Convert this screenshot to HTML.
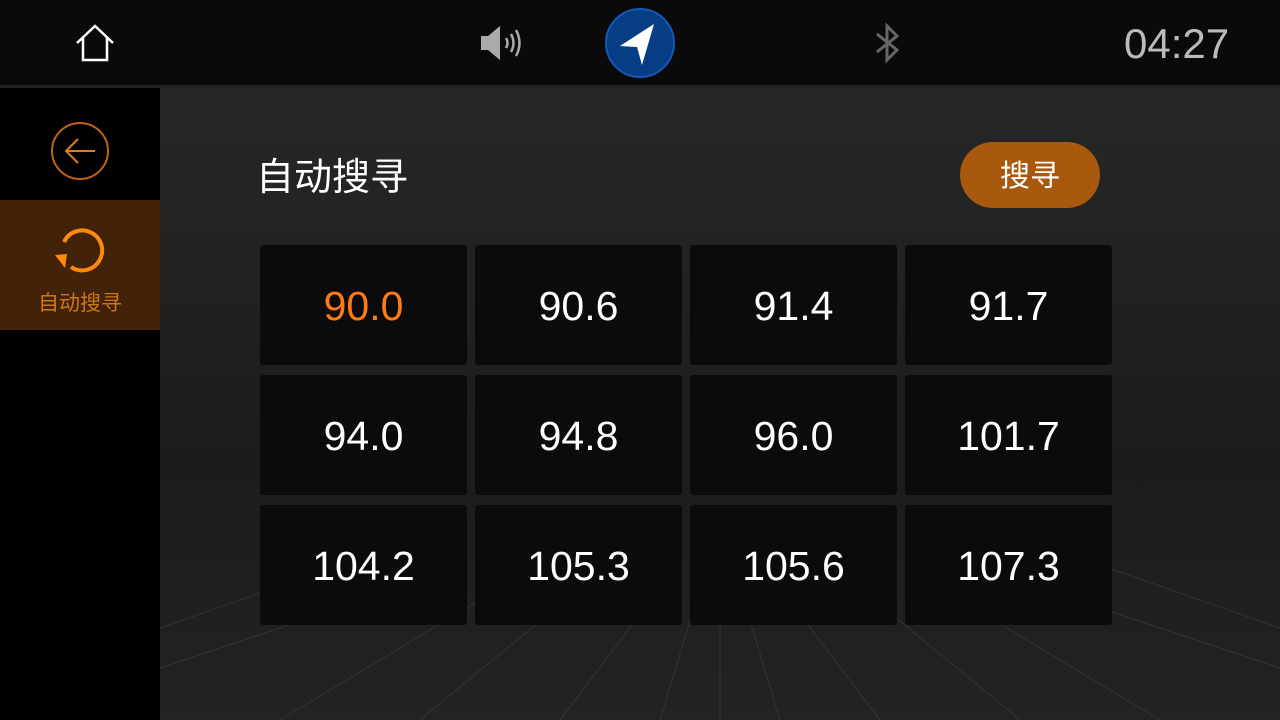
<!DOCTYPE html>
<html><head><meta charset="utf-8"><style>
*{margin:0;padding:0;box-sizing:border-box}
body{width:1280px;height:720px;overflow:hidden;background:#000;font-family:"Liberation Sans","Noto Sans CJK SC",sans-serif;position:relative}
.top{position:absolute;left:0;top:0;width:1280px;height:85px;background:#0a0a0a}
.sep{position:absolute;left:0;top:85px;width:1280px;height:3px;background:#202121}
.side{position:absolute;left:0;top:88px;width:160px;height:632px;background:#000}
.act{position:absolute;left:0;top:200px;width:160px;height:130px;background:#42230a}
.main{position:absolute;left:160px;top:88px;width:1120px;height:632px;background:linear-gradient(#262727,#1b1c1c 60%,#222323);overflow:hidden}
.tile{position:absolute;width:207px;height:120px;background:#0b0b0b;border-radius:3px;color:#fff;font-size:41px;text-align:center;line-height:122px}
</style></head><body>
<div class="top"></div><div class="sep"></div>
<svg style="position:absolute;left:74px;top:24px" width="42" height="38" viewBox="0 0 42 38"><path d="M3 19 L21 2 L39 19 M9 14 V36 H33 V14" fill="none" stroke="#fff" stroke-width="2.5"/></svg>
<svg style="position:absolute;left:478px;top:24px" width="50" height="38" viewBox="0 0 50 38"><path d="M3 12 H10 L22 2 V36 L10 26 H3Z" fill="#aaa"/><path d="M28 14 Q31 19 28 24 M33 10 Q38 19 33 28 M38 6 Q45 19 38 32" fill="none" stroke="#aaa" stroke-width="2.5"/></svg>
<div style="position:absolute;left:605px;top:8px;width:70px;height:70px;border-radius:50%;background:#073d85;border:2px solid #1459b3"></div>
<svg style="position:absolute;left:605px;top:8px" width="70" height="70" viewBox="0 0 70 70"><path d="M49 16 L15 38 L32 39 L37 57Z" fill="#fff"/></svg>
<svg style="position:absolute;left:874px;top:22px" width="28" height="42" viewBox="0 0 28 42"><path d="M3 12 L23 28 L13 38 V4 L23 14 L3 30" fill="none" stroke="#666" stroke-width="3"/></svg>
<div style="position:absolute;left:1124px;top:20px;color:#bbb;font-size:42px">04:27</div>
<div class="side"></div><div class="act"></div>
<svg style="position:absolute;left:50px;top:121px" width="60" height="60" viewBox="0 0 60 60"><circle cx="30" cy="30" r="28" fill="none" stroke="#c0650f" stroke-width="2"/><path d="M45 30 H16 M28 18 L16 30 L28 42" fill="none" stroke="#e07a12" stroke-width="2"/></svg>
<svg style="position:absolute;left:52px;top:224px" width="54" height="52" viewBox="0 0 54 52"><path d="M12 18 A20 20 0 1 1 19 43" fill="none" stroke="#ff8a0a" stroke-width="4"/><path d="M3 31 L15 30 L13 44Z" fill="#ff8a0a"/></svg>
<div style="position:absolute;left:0;top:287px;width:160px;text-align:center;color:#d07518;font-size:21px">自动搜寻</div>
<div class="main">
<svg style="position:absolute;left:0;top:420px" width="1120" height="212" viewBox="0 0 1120 212">
<g stroke="#3a3b3b" stroke-width="1" opacity=".7">
<path d="M120 212 L340 80 M1000 212 L780 80 M260 212 L420 80 M860 212 L700 80 M400 212 L500 80 M720 212 L620 80 M500 212 L540 80 M620 212 L580 80 M560 212 L560 80"/>
<path d="M0 160 L300 60 M1120 160 L820 60 M0 120 L200 50 M1120 120 L920 50"/>
</g></svg>
</div>
<div style="position:absolute;left:256px;top:146px;color:#fff;font-size:38px">自动搜寻</div>
<div style="position:absolute;left:960px;top:142px;width:140px;height:66px;border-radius:33px;background:#a8590d;color:#fff;font-size:30px;text-align:center;line-height:70px">搜寻</div>
<div class="tile" style="left:260px;top:245px;color:#ff7a12">90.0</div>
<div class="tile" style="left:475px;top:245px">90.6</div>
<div class="tile" style="left:690px;top:245px">91.4</div>
<div class="tile" style="left:905px;top:245px">91.7</div>
<div class="tile" style="left:260px;top:375px">94.0</div>
<div class="tile" style="left:475px;top:375px">94.8</div>
<div class="tile" style="left:690px;top:375px">96.0</div>
<div class="tile" style="left:905px;top:375px">101.7</div>
<div class="tile" style="left:260px;top:505px">104.2</div>
<div class="tile" style="left:475px;top:505px">105.3</div>
<div class="tile" style="left:690px;top:505px">105.6</div>
<div class="tile" style="left:905px;top:505px">107.3</div>
</body></html>
